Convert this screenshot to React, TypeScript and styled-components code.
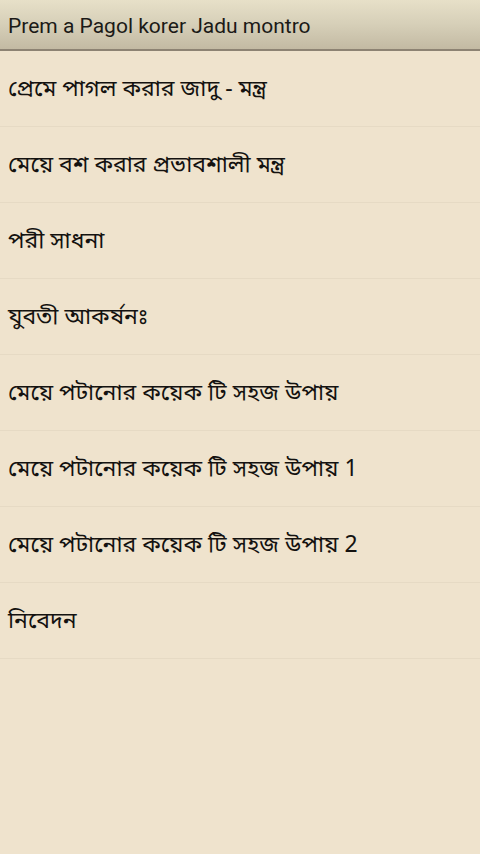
import { createGlobalStyle, styled } from "styled-components";

const GlobalStyle = createGlobalStyle`
  html, body {
    margin: 0;
    padding: 0;
    background: #efe3cd;
  }
  #root {
    min-height: 854px;
  }
`;

const Screen = styled.div`
  width: 480px;
  min-height: 854px;
  background: #efe3cd;
  display: flex;
  flex-direction: column;
`;

const ActionBar = styled.header`
  height: 51px;
  box-sizing: border-box;
  display: flex;
  align-items: center;
  padding: 3px 0 0 8px;
  background: linear-gradient(to bottom, #e7e0c8 0%, #d6cfb8 50%, #c3baa3 100%);
  border-bottom: 2px solid #8d8373;
`;

const Title = styled.h1`
  margin: 0;
  font-family: Roboto, "Noto Sans", sans-serif;
  font-weight: 400;
  font-size: 21px;
  color: #1b1a17;
`;

const List = styled.ul`
  list-style: none;
  margin: 0;
  padding: 0;
`;

const Row = styled.li`
  height: 76px;
  box-sizing: border-box;
  display: flex;
  align-items: center;
  padding: 3px 0 0 8px;
  border-bottom: 1px solid #e6dac4;
  font-family: "Noto Sans Bengali", "Lohit Bengali", "Noto Sans", Roboto, sans-serif;
  font-size: 23px;
  color: #141210;
`;

const items = [
  "প্রেমে পাগল করার জাদু - মন্ত্র",
  "মেয়ে বশ করার প্রভাবশালী মন্ত্র",
  "পরী সাধনা",
  "যুবতী আকর্ষনঃ",
  "মেয়ে পটানোর কয়েক টি সহজ উপায়",
  "মেয়ে পটানোর কয়েক টি সহজ উপায় 1",
  "মেয়ে পটানোর কয়েক টি সহজ উপায় 2",
  "নিবেদন",
];

const App = () => {
  return (
    <>
      <GlobalStyle />
      <Screen>
        <ActionBar>
          <Title>Prem a Pagol korer Jadu montro</Title>
        </ActionBar>
        <List>
          {items.map((item) => (
            <Row key={item}>{item}</Row>
          ))}
        </List>
      </Screen>
    </>
  );
};

export default App;
